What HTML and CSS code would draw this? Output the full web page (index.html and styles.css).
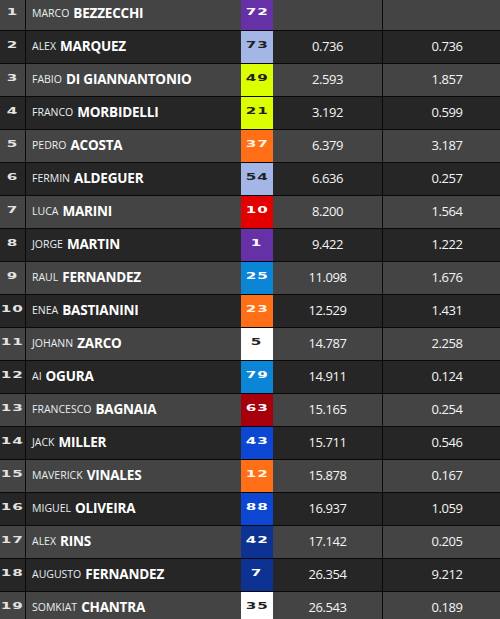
FILE: index.html
```html
<!DOCTYPE html>
<html>
<head>
<meta charset="utf-8">
<link rel="stylesheet" href="styles.css">
</head>
<body>
<div class="table">
  <div class="row odd"><div class="pos"><span>1</span></div><div class="name"><span class="first">MARCO</span><span class="last">BEZZECCHI</span></div><div class="num c-purple"><span>72</span></div><div class="time"></div><div class="gap"></div></div>
  <div class="row even"><div class="pos"><span>2</span></div><div class="name"><span class="first">ALEX</span><span class="last">MARQUEZ</span></div><div class="num c-lav"><span>73</span></div><div class="time">0.736</div><div class="gap">0.736</div></div>
  <div class="row odd"><div class="pos"><span>3</span></div><div class="name"><span class="first">FABIO</span><span class="last">DI GIANNANTONIO</span></div><div class="num c-lime"><span>49</span></div><div class="time">2.593</div><div class="gap">1.857</div></div>
  <div class="row even"><div class="pos"><span>4</span></div><div class="name"><span class="first">FRANCO</span><span class="last">MORBIDELLI</span></div><div class="num c-lime"><span>21</span></div><div class="time">3.192</div><div class="gap">0.599</div></div>
  <div class="row odd"><div class="pos"><span>5</span></div><div class="name"><span class="first">PEDRO</span><span class="last">ACOSTA</span></div><div class="num c-orange"><span>37</span></div><div class="time">6.379</div><div class="gap">3.187</div></div>
  <div class="row even"><div class="pos"><span>6</span></div><div class="name"><span class="first">FERMIN</span><span class="last">ALDEGUER</span></div><div class="num c-lav"><span>54</span></div><div class="time">6.636</div><div class="gap">0.257</div></div>
  <div class="row odd"><div class="pos"><span>7</span></div><div class="name"><span class="first">LUCA</span><span class="last">MARINI</span></div><div class="num c-red"><span>10</span></div><div class="time">8.200</div><div class="gap">1.564</div></div>
  <div class="row even"><div class="pos"><span>8</span></div><div class="name"><span class="first">JORGE</span><span class="last">MARTIN</span></div><div class="num c-purple"><span>1</span></div><div class="time">9.422</div><div class="gap">1.222</div></div>
  <div class="row odd"><div class="pos"><span>9</span></div><div class="name"><span class="first">RAUL</span><span class="last">FERNANDEZ</span></div><div class="num c-sky"><span>25</span></div><div class="time">11.098</div><div class="gap">1.676</div></div>
  <div class="row even"><div class="pos"><span>10</span></div><div class="name"><span class="first">ENEA</span><span class="last">BASTIANINI</span></div><div class="num c-orange"><span>23</span></div><div class="time">12.529</div><div class="gap">1.431</div></div>
  <div class="row odd"><div class="pos"><span>11</span></div><div class="name"><span class="first">JOHANN</span><span class="last">ZARCO</span></div><div class="num c-white"><span>5</span></div><div class="time">14.787</div><div class="gap">2.258</div></div>
  <div class="row even"><div class="pos"><span>12</span></div><div class="name"><span class="first">AI</span><span class="last">OGURA</span></div><div class="num c-sky"><span>79</span></div><div class="time">14.911</div><div class="gap">0.124</div></div>
  <div class="row odd"><div class="pos"><span>13</span></div><div class="name"><span class="first">FRANCESCO</span><span class="last">BAGNAIA</span></div><div class="num c-darkred"><span>63</span></div><div class="time">15.165</div><div class="gap">0.254</div></div>
  <div class="row even"><div class="pos"><span>14</span></div><div class="name"><span class="first">JACK</span><span class="last">MILLER</span></div><div class="num c-blue"><span>43</span></div><div class="time">15.711</div><div class="gap">0.546</div></div>
  <div class="row odd"><div class="pos"><span>15</span></div><div class="name"><span class="first">MAVERICK</span><span class="last">VINALES</span></div><div class="num c-orange"><span>12</span></div><div class="time">15.878</div><div class="gap">0.167</div></div>
  <div class="row even"><div class="pos"><span>16</span></div><div class="name"><span class="first">MIGUEL</span><span class="last">OLIVEIRA</span></div><div class="num c-blue"><span>88</span></div><div class="time">16.937</div><div class="gap">1.059</div></div>
  <div class="row odd"><div class="pos"><span>17</span></div><div class="name"><span class="first">ALEX</span><span class="last">RINS</span></div><div class="num c-navy"><span>42</span></div><div class="time">17.142</div><div class="gap">0.205</div></div>
  <div class="row even"><div class="pos"><span>18</span></div><div class="name"><span class="first">AUGUSTO</span><span class="last">FERNANDEZ</span></div><div class="num c-navy"><span>7</span></div><div class="time">26.354</div><div class="gap">9.212</div></div>
  <div class="row odd"><div class="pos"><span>19</span></div><div class="name"><span class="first">SOMKIAT</span><span class="last">CHANTRA</span></div><div class="num c-white"><span>35</span></div><div class="time">26.543</div><div class="gap">0.189</div></div>
</div>
</body>
</html>
```

FILE: styles.css
```css
html, body {
  margin: 0;
  padding: 0;
  background: #262626;
  overflow: hidden;
}
.table {
  width: 511px;
  margin-top: -2px;
  font-family: "Open Sans", "Noto Sans", sans-serif;
  color: #fff;
}
.row {
  display: grid;
  grid-template-columns: 26px 215px 32px 110px 128px;
  height: 32px;
  border-bottom: 1px solid #0a0a0a;
}
.row.odd { background: #444444; }
.row.even { background: #262626; }
.row > div {
  display: flex;
  align-items: center;
  box-sizing: border-box;
  padding-bottom: 3px;
}
.pos {
  justify-content: center;
  border-right: 1px solid #0a0a0a;
  font-family: "DejaVu Sans", sans-serif;
  font-weight: bold;
  font-size: 9.5px;
  color: #e2e2e2;
}
.pos span, .num span {
  display: inline-block;
  transform: scale(1.6, 0.85);
  letter-spacing: 0.6px;
}
.name {
  padding-left: 6px;
  white-space: nowrap;
  gap: 4px;
}
.first {
  font-size: 10.5px;
  color: #e8eef2;
}
.last {
  font-size: 13.5px;
  font-weight: 700;
  letter-spacing: -0.2px;
}
.num {
  justify-content: center;
  font-family: "DejaVu Sans", sans-serif;
  font-weight: bold;
  font-size: 9.5px;
  color: #fff;
}
.time, .gap {
  justify-content: center;
  font-size: 13px;
  letter-spacing: -0.4px;
  color: #f4f4f4;
}
.time {
  border-right: 1px solid #0a0a0a;
}
.c-purple { background: #6630a6; }
.c-lav { background: #a3b6e6; color: #222 !important; }
.c-lime { background: #dcff00; color: #222 !important; }
.c-orange { background: #ff6f17; color: #fff3e6 !important; }
.c-red { background: #e20000; }
.c-sky { background: #0b86d6; }
.c-white { background: #ffffff; color: #222 !important; }
.c-darkred { background: #a6000c; }
.c-blue { background: #0b47d2; }
.c-navy { background: #0e3291; }
```
